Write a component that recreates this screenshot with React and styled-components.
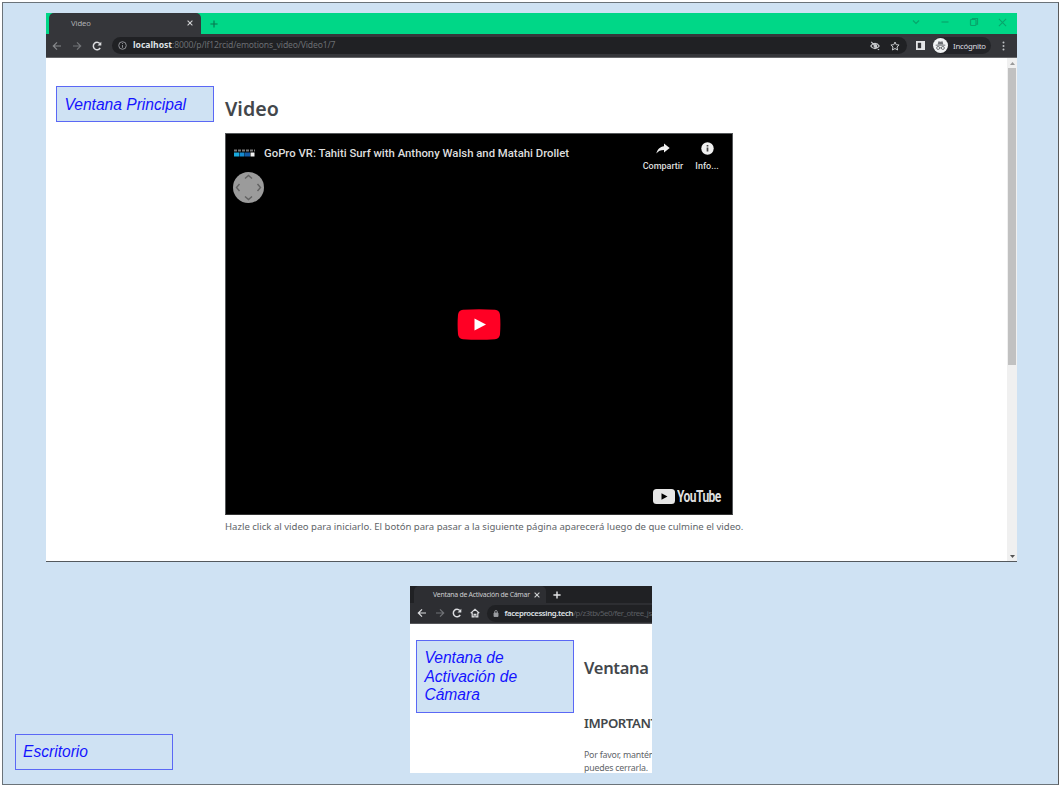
import React from "react";
import styled, { createGlobalStyle } from "styled-components";

const Global = createGlobalStyle`
  *, *::before, *::after { box-sizing: border-box; }
  body { margin: 0; background: #fff; }
`;

const ui = '"Noto Sans", "Open Sans", sans-serif';

const Desktop = styled.main`
  position: relative;
  width: 1057px;
  height: 783px;
  margin: 2px 0 0 2px;
  background: #cfe2f3;
  border: 1px solid #6b7379;
  border-right-color: #595959;
  font-family: ${ui};
`;

const Window = styled.section`
  position: absolute;
  left: ${(p) => p.$x - 3}px;
  top: ${(p) => p.$y - 3}px;
  width: ${(p) => p.$w}px;
  height: ${(p) => p.$h}px;
  display: flex;
  flex-direction: column;
  background: #fff;
  overflow: hidden;
  border-bottom: ${(p) => (p.$edge ? "1px solid #54595d" : "none")};
`;

const Note = styled.aside`
  position: absolute;
  left: ${(p) => p.$x - 3}px;
  top: ${(p) => p.$y - 3}px;
  width: 158px;
  height: ${(p) => p.$h}px;
  padding: ${(p) => p.$top || 8}px 40px 0 7px;
  border: 1px solid #5b68f5;
  background: #cfe2f3;
  color: #1414ff;
  font: italic 15.6px/18.7px "Liberation Sans", Arial, sans-serif;
  white-space: ${(p) => (p.$wrap ? "normal" : "nowrap")};
`;

const TabStrip = styled.header`
  display: flex;
  flex: none;
  height: ${(p) => p.$h}px;
  padding-left: ${(p) => p.$inset}px;
  background: ${(p) => p.$bg};
  color: ${(p) => p.$fg};
`;

const Tab = styled.div`
  display: flex;
  align-items: center;
  justify-content: space-between;
  width: ${(p) => p.$w}px;
  padding: 0 ${(p) => p.$end}px ${(p) => p.$lift || 0}px ${(p) => p.$start}px;
  border-radius: 5px 5px 0 0;
  background: ${(p) => p.$bg};
  color: ${(p) => p.$fg};
  font-size: ${(p) => p.$size}px;
  letter-spacing: ${(p) => p.$track || 0}px;
  white-space: nowrap;
`;

const NewTab = styled.div`
  display: flex;
  align-items: center;
  padding-left: ${(p) => p.$gap}px;
`;

const WindowControls = styled.div`
  display: flex;
  align-items: center;
  gap: 19px;
  margin-left: auto;
  padding: 0 10px 3px 0;
  color: #07a56b;
`;

const Toolbar = styled.nav`
  display: flex;
  align-items: center;
  flex: none;
  height: ${(p) => p.$h}px;
  padding-left: ${(p) => p.$inset}px;
  background: ${(p) => p.$bg};
  border-bottom: 1px solid ${(p) => p.$line};
  color: #dcdde0;
`;

const NavIcons = styled.div`
  display: flex;
  align-items: center;
  gap: ${(p) => p.$gap}px;
`;

const AddressBar = styled.div`
  display: flex;
  align-items: center;
  flex: none;
  width: ${(p) => p.$w}px;
  height: 17px;
  margin-left: ${(p) => p.$left}px;
  padding: 0 7px 0 6px;
  border-radius: 9px;
  background: #202124;
  color: #9a9ca0;
`;

const Url = styled.span`
  margin-left: ${(p) => p.$left}px;
  font-size: ${(p) => p.$size}px;
  line-height: 15px;
  letter-spacing: ${(p) => p.$track}px;
  white-space: nowrap;
  color: ${(p) => p.$path};
`;

const Host = styled.b`
  font-weight: ${(p) => p.$weight};
  letter-spacing: ${(p) => p.$track || 0}px;
  color: #dfe1e5;
`;

const AddressActions = styled.div`
  display: flex;
  gap: 10px;
  margin-left: auto;
  color: #c8cacd;
`;

const BrowserActions = styled.div`
  display: flex;
  align-items: center;
  margin-left: 9px;
`;

const Incognito = styled.div`
  display: flex;
  align-items: center;
  width: 58px;
  height: 17px;
  margin: 0 11px 0 8px;
  gap: 5px;
  border-radius: 9px;
  background: #232428;
  font-size: 7.8px;
  letter-spacing: -0.25px;
`;

const Viewport = styled.div`
  display: flex;
  flex: 1;
  min-height: 0;
`;

const Page = styled.article`
  flex: 1;
  min-width: 0;
  padding: ${(p) => p.$pad};
  color: #43474b;
`;

const Title = styled.h1`
  margin: 0;
  font-size: ${(p) => p.$size}px;
  font-weight: 600;
  line-height: 28px;
  letter-spacing: ${(p) => p.$track}px;
  white-space: nowrap;
`;

const Subtitle = styled.h2`
  margin: 31px 0 0;
  font-size: 13.2px;
  font-weight: 600;
  line-height: 20px;
  letter-spacing: -0.45px;
  white-space: nowrap;
`;

const Paragraph = styled.p`
  margin: ${(p) => p.$top}px 0 0;
  color: #606468;
  font-size: ${(p) => p.$size}px;
  line-height: ${(p) => p.$line || 13}px;
  letter-spacing: ${(p) => p.$track}px;
  white-space: nowrap;
`;

const Player = styled.div`
  display: grid;
  grid-template-rows: 1fr auto 1fr;
  width: 508px;
  height: 382px;
  margin-top: 10px;
  border: 1px solid #55585a;
  border-bottom-color: #333;
  background: #000;
  color: #dedede;
  font-family: Roboto, sans-serif;
`;

const PlayerTop = styled.div`
  display: flex;
  align-items: flex-start;
  padding: 8px 14px 0 7px;
`;

const Channel = styled.div`
  display: flex;
  flex-direction: column;
  gap: 14px;
  padding-top: 7px;
`;

const VideoTitle = styled.span`
  margin-top: 3px;
  font-size: 11.33px;
  font-weight: 500;
  line-height: 16px;
  white-space: nowrap;
`;

const PlayerButton = styled.div`
  display: flex;
  flex-direction: column;
  align-items: center;
  width: ${(p) => p.$w}px;
  margin-left: ${(p) => p.$left};
  gap: 5px;
  font-size: 9px;
  font-weight: 500;
  line-height: 12px;
`;

const PlayRow = styled.div`
  display: flex;
  justify-content: center;
`;

const PlayerBottom = styled.div`
  display: flex;
  align-items: center;
  align-self: end;
  justify-content: flex-end;
  gap: 2px;
  height: 18px;
  margin: 0 10px 9px 0;
`;

const Wordmark = styled.span`
  width: 45px;
  font: 700 17px/18px Roboto, sans-serif;
  letter-spacing: -0.8px;
  transform: scaleX(0.71);
  transform-origin: left;
`;

const ScrollTrack = styled.div`
  display: flex;
  flex-direction: column;
  align-items: center;
  justify-content: space-between;
  width: 10px;
  padding: 0 0 3px;
  background: #f0f0f0;
`;

const ScrollTop = styled.div`
  display: flex;
  flex-direction: column;
  align-items: center;
  gap: 3px;
  padding-top: 4px;
`;

const ScrollThumb = styled.div`
  width: 8px;
  height: 297px;
  background: #c1c1c1;
`;

const Glyph = styled.svg`
  display: block;
  flex: none;
`;

const Icon = ({ w = 10, h = w, box = "0 0 10 10", stroke = 1.2, children, color = "currentColor" }) => (
  <Glyph width={w} height={h} viewBox={box} fill="none" stroke={color} strokeWidth={stroke}>
    {children}
  </Glyph>
);

const Back = ({ color }) => <Icon color={color}><path d="M9 5H1.5M5 1.3 1.3 5 5 8.7" /></Icon>;
const Forward = ({ color }) => <Icon color={color}><path d="M1 5h7.5M5 1.3 8.7 5 5 8.7" /></Icon>;
const Reload = () => (
  <Icon stroke={1.5}>
    <path d="M8.2 7A3.7 3.7 0 1 1 7.8 2.6" />
    <path d="M9.3.8v3.8H5.5z" fill="currentColor" stroke="none" />
  </Icon>
);
const Home = () => <Icon><path d="M.7 5.1 5 1.2l4.3 3.9M2.2 4.6v4.2h1.9V6.3h1.8v2.5h1.9V4.6" /></Icon>;
const Close = ({ w = 6, color, stroke = 1.8 }) => <Icon w={w} color={color} stroke={stroke}><path d="m1 1 8 8m0-8-8 8" /></Icon>;
const Plus = ({ stroke = 1.4 }) => <Icon w={8} stroke={stroke}><path d="M5 .5v9M.5 5h9" /></Icon>;
const Lock = () => (
  <Icon w={6} h={7} box="0 0 6 7" stroke={0.9}>
    <path d="M1 3h4v3.5H1z" fill="currentColor" /><path d="M1.7 3V1.8a1.3 1.3 0 0 1 2.6 0V3" />
  </Icon>
);

function MainWindow() {
  return (
    <Window $x={46} $y={13} $w={971} $h={549} $edge>
      <TabStrip $h={21} $inset={3} $bg="#00d787" $fg="#08764f">
        <Tab $w={152} $start={22} $end={8} $lift={1} $bg="#35363a" $fg="#aeb0b3" $size={7.7} $track={-0.1}>
          Video
          <Close color="#d0d1d3" />
        </Tab>
        <NewTab $gap={9}><Plus /></NewTab>
        <WindowControls>
          <Icon><path d="m2 3.5 3 3 3-3" /></Icon>
          <Icon><path d="M1.5 5h7" /></Icon>
          <Icon><rect x="1.5" y="2.5" width="5.5" height="6" rx="1" /><path d="M3.5 2.2V1.5h5v5.7H7.2" /></Icon>
          <Close w={9} stroke={1.2} />
        </WindowControls>
      </TabStrip>
      <Toolbar $h={24} $inset={6} $bg="#35363a" $line="#66676a">
        <NavIcons $gap={10}><Back color="#87898c" /><Forward color="#737578" /><Reload /></NavIcons>
        <AddressBar $w={795} $left={10}>
          <Icon w={9} stroke={1}><circle cx="5" cy="5" r="4.2" /><path d="M5 4.5v3M5 2.3v1.1" /></Icon>
          <Url $left={6} $size={8.6} $track={-0.16} $path="#6b6e72"><Host $weight={700}>localhost</Host>:8000/p/lf12rcid/emotions_video/Video1/7</Url>
          <AddressActions>
            <Icon><path d="M.8 5S2.4 2.3 5 2.3 9.2 5 9.2 5 7.6 7.7 5 7.7.8 5 .8 5zM1.2.8l7.8 8" /><circle cx="5.4" cy="5" r="1.3" fill="currentColor" /></Icon>
            <Icon stroke={1}><path d="m5 1 1.2 2.7 2.9.3L7 6l.6 3L5 7.5 2.4 9 3 6 .9 4l2.9-.3z" /></Icon>
          </AddressActions>
        </AddressBar>
        <BrowserActions>
          <Icon w={9}><path d="M0 0h10v10H0z" fill="#e4e5e7" stroke="none" /><path d="M2 2h3.7v6H2z" fill="#35363a" stroke="none" /></Icon>
          <Incognito>
            <Icon w={15} box="0 0 14 14" stroke={0.9}>
              <circle cx="7" cy="7" r="7" fill="#f1f3f4" stroke="none" />
              <path d="m4.3 6 .8-3 1.9.5 1.9-.5.8 3z" fill="#6d7074" stroke="none" />
              <path d="M2.5 6.7h9M6.2 9.2h1.6" stroke="#6d7074" />
              <circle cx="4.8" cy="9.3" r="1.4" stroke="#6d7074" /><circle cx="9.2" cy="9.3" r="1.4" stroke="#6d7074" />
            </Icon>
            Incógnito
          </Incognito>
          <Icon w={3} h={10} box="0 0 3 10"><g fill="#bfc1c4" stroke="none"><circle cx="1.5" cy="1.4" r="1" /><circle cx="1.5" cy="5" r="1" /><circle cx="1.5" cy="8.6" r="1" /></g></Icon>
        </BrowserActions>
      </Toolbar>
      <Viewport>
        <Page $pad="37px 0 0 179px">
          <Title $size={19.6} $track={0}>Video</Title>
          <Player>
            <PlayerTop>
              <Channel>
                <Icon w={23} h={9} box="0 0 23 9">
                  <path d="M1 1.5h21" stroke="#777" strokeWidth="2" strokeDasharray="3 1" />
                  <path d="M1 3.5h5v4H1z" fill="#18a8dc" stroke="none" /><path d="M6.500 3.500h5v4h-5z" fill="#168bd0" stroke="none" />
                  <path d="M12 3.500h5v4h-5z" fill="#1259a5" stroke="none" /><path d="M17.500 3.500h4v4h-4z" fill="#f2f2f2" stroke="none" />
                </Icon>
                <Icon w={31} box="0 0 31 31" stroke={1.4} color="#626262">
                  <circle cx="15.5" cy="15.5" r="15.5" fill="#9b9b9b" stroke="none" />
                  <path d="m12 6.5 3.500-3 3.500 3M12 24.500l3.500 3 3.500-3M6.500 12l-3 3.500 3 3.500M24.500 12l3 3.500-3 3.500" />
                </Icon>
              </Channel>
              <VideoTitle>GoPro VR: Tahiti Surf with Anthony Walsh and Matahi Drollet</VideoTitle>
              <PlayerButton $w={42} $left="auto">
                <Icon w={14} h={13} box="0 0 14 13"><path d="M8 1.5 13.7 6 8 10.5V8C4.6 8 2.2 9 .4 11.5 1.3 7.5 4 4.8 8 4.3z" fill="#f0f0f0" stroke="none" /></Icon>
                Compartir
              </PlayerButton>
              <PlayerButton $w={22} $left="12px">
                <Icon w={13} box="0 0 13 13" stroke={1.7} color="#444"><circle cx="6.5" cy="6.5" r="6.2" fill="#f0f0f0" stroke="none" /><path d="M6.5 5.6v4M6.5 3v1.6" /></Icon>
                Info...
              </PlayerButton>
            </PlayerTop>
            <PlayRow>
              <Icon w={44} h={31} box="0 0 44 31">
                <path d="M6 .7Q22-.4 38 .7q4.500.3 5 5 .8 9.800 0 19.600-.5 4.700-5 5-16 1.100-32 0-4.500-.3-5-5Q.2 15.500 1 5.700q.5-4.700 5-5z" fill="#ff0024" stroke="none" />
                <path d="m17.500 9.500 11.500 6-11.500 6z" fill="#fff" stroke="none" />
              </Icon>
            </PlayRow>
            <PlayerBottom>
              <Icon w={22} h={15} box="0 0 22 15"><rect width="22" height="15" rx="3.5" fill="#e6e6e6" stroke="none" /><path d="m8.500 4.300 6 3.200-6 3.200z" fill="#000" stroke="none" /></Icon>
              <Wordmark>YouTube</Wordmark>
            </PlayerBottom>
          </Player>
          <Paragraph $top={5} $size={9.55} $track={0}>Hazle click al video para iniciarlo. El botón para pasar a la siguiente página aparecerá luego de que culmine el video.</Paragraph>
        </Page>
        <ScrollTrack>
          <ScrollTop>
            <Icon w={5} h={3} box="0 0 5 3"><path d="M0 3 2.5 0 5 3z" fill="#999" stroke="none" /></Icon>
            <ScrollThumb />
          </ScrollTop>
          <Icon w={5} h={3} box="0 0 5 3"><path d="M0 0h5L2.5 3z" fill="#555" stroke="none" /></Icon>
        </ScrollTrack>
      </Viewport>
    </Window>
  );
}

function CameraWindow() {
  return (
    <Window $x={410} $y={586} $w={242} $h={187}>
      <TabStrip $h={17} $inset={4} $bg="#202124" $fg="#e2e3e5">
        <Tab $w={132} $start={19} $end={6} $bg="#2d2e32" $fg="#cccdd0" $size={6.9} $track={-0.25}>
          Ventana de Activación de Cámar
          <Close color="#d0d1d3" />
        </Tab>
        <NewTab $gap={7}><Plus stroke={1.8} /></NewTab>
      </TabStrip>
      <Toolbar $h={21} $inset={7} $bg="#2d2e32" $line="#55565a">
        <NavIcons $gap={7.5}><Back /><Forward color="#707276" /><Reload /><Home /></NavIcons>
        <AddressBar $w={220} $left={7}>
          <Lock />
          <Url $left={6} $size={7.8} $track={-0.42} $path="#5c5f63"><Host $weight={600} $track={-0.38}>faceprocessing.tech</Host>/p/z3tbv5e0/fer_otree_js</Url>
        </AddressBar>
      </Toolbar>
      <Viewport>
        <Page $pad="30px 0 0 174px">
          <Title $size={16.5} $track={-0.3}>Ventana</Title>
          <Subtitle>IMPORTANTE</Subtitle>
          <Paragraph $top={16} $size={8.8} $track={-0.2} $line={12.6}>Por favor, mantén<br />puedes cerrarla.</Paragraph>
        </Page>
      </Viewport>
    </Window>
  );
}

export default function App() {
  return (
    <>
      <Global />
      <Desktop>
        <MainWindow />
        <CameraWindow />
        <Note $x={56.4} $y={86.4} $h={36} $top={8.6}>Ventana Principal</Note>
        <Note $x={416.4} $y={640} $h={73} $wrap>Ventana de Activación de Cámara</Note>
        <Note $x={15} $y={733.5} $h={36}>Escritorio</Note>
      </Desktop>
    </>
  );
}
